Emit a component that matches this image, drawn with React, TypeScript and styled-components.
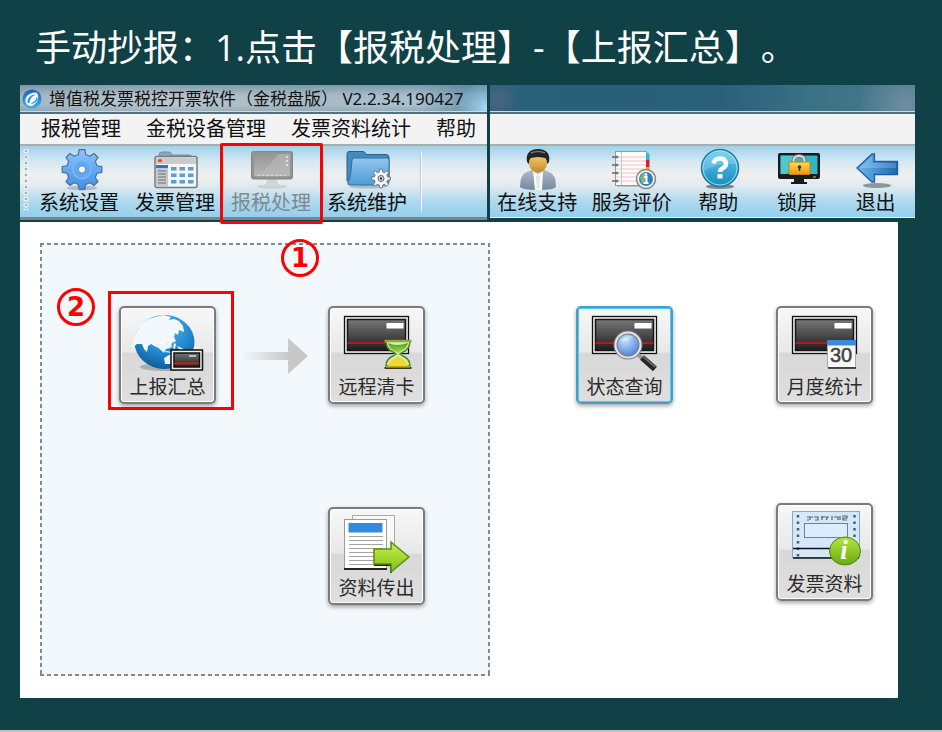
import React from "react";
import styled, { createGlobalStyle, css } from "styled-components";

const GlobalStyle = createGlobalStyle`
  *, *::before, *::after { box-sizing: border-box; }
  body {
    margin: 0;
    background: #104146;
    font-family: "Noto Sans", "Noto Sans CJK SC", sans-serif;
    text-spacing-trim: space-all;
    color: #111;
  }
  button { font: inherit; color: inherit; background: none; border: 0; padding: 0; cursor: pointer; }
`;

const Slide = styled.main`
  min-height: 100vh;
  padding: 18px 27px 24px 20px;
  background: #104146;
  border-bottom: 2px solid #c0c0c0;
`;

const Heading = styled.h1`
  margin: 0 0 7px;
  padding-left: 15px;
  font-family: "Open Sans", "Noto Sans CJK SC", sans-serif;
  font-size: 36px;
  font-weight: 400;
  line-height: 60px;
  color: #fff;
  white-space: nowrap;
`;

const Windows = styled.div`
  display: grid;
  grid-template-columns: minmax(0, 467fr) minmax(0, 425fr);
  gap: 3px;
  align-items: start;
`;

const Window = styled.section<{ $framed?: boolean }>`
  border-bottom: ${(p) => (p.$framed ? "3px solid #7d8589" : "1px solid #eef6fa")};
`;

const TitleBar = styled.header<{ $plain?: boolean }>`
  display: flex;
  align-items: center;
  gap: 7px;
  height: 29px;
  padding: 0 2px;
  border-bottom: 2px solid #54707f;
  box-shadow: inset 0 -1px 0 #c9dbe4;
  font-size: 17px;
  line-height: 24px;
  white-space: nowrap;
  background: ${(p) =>
    p.$plain
      ? "radial-gradient(circle at 8px 14px, #4d6580, transparent 22px), radial-gradient(circle at 98% 80%, #6f8ea2, transparent 50px), linear-gradient(90deg, #29607a, #2a6079 55%, #3b7186 75%, #47788c)"
      : "radial-gradient(circle at 100% 90%, #a9dcf6, transparent 30px), linear-gradient(180deg, rgba(90,125,145,.55), transparent 40%, transparent 75%, rgba(90,125,145,.3)), linear-gradient(90deg, #a2b6c2, #b9c6cd 30%, #a7bac4 60%, #a9c0cd 85%, #5b8ba5)"};
`;

const WindowName = styled.h2`
  margin: 0;
  font-size: 17px;
  font-weight: 400;
`;

const MenuBar = styled.nav`
  display: flex;
  align-items: center;
  gap: 25px;
  height: 30px;
  padding-left: 21px;
  background: #f3f3f3;
  font-size: 20px;
  line-height: 28px;
  white-space: nowrap;
`;

const MenuItem = styled.button``;

const Toolbar = styled.div`
  display: flex;
  height: 73px;
  border-top: 2px solid #a9adb0;
  background: linear-gradient(180deg, #9fd2ec, #d5e8f2 22%, #efefef 42%, #e2ebf0 55%, #abd8ee 80%, #93cfee);
`;

const Grip = styled.span`
  width: 11px;
  flex: none;
  margin: 3px 0 6px;
  background: radial-gradient(circle at 6px 2px, #a9b6be 1px, #fff 2px, transparent 3px);
  background-size: 11px 6px;
`;

const Divider = styled.span`
  width: 2px;
  margin: 5px 0 5px 5px;
  background: #fff;
  border-left: 1px solid #b5c8d3;
`;

const ToolButton = styled.button<{ $grow?: number; $muted?: boolean }>`
  position: relative;
  display: flex;
  flex-direction: column;
  align-items: center;
  ${(p) => (p.$grow ? css`flex: ${p.$grow} 1 0;` : css`flex: 0 0 96px;`)}
  padding-top: 3px;
  font-size: 20px;
  line-height: 24px;
  white-space: nowrap;
  color: ${(p) => (p.$muted ? "#82898d" : "#111")};
  svg { flex: none; overflow: visible; }
`;

const ToolOutline = styled.span`
  position: absolute;
  inset: -3px -4px -7px -3px;
  border: 3px solid #f00;
  border-radius: 2px;
`;

const StepBadge = styled.span<{ $floating?: boolean }>`
  display: flex;
  align-items: center;
  justify-content: center;
  width: 38px;
  height: 38px;
  border: 3px solid #f00;
  border-radius: 50%;
  font-family: "DejaVu Sans", sans-serif;
  font-size: 26px;
  font-weight: 700;
  line-height: 30px;
  color: #f00;
  ${(p) => p.$floating && css`position: absolute; top: 93px; left: 58px; z-index: 2;`}
`;

const Workspace = styled.section`
  display: grid;
  grid-template-columns: minmax(0, 450fr) minmax(0, 408fr);
  margin: 2px 17px 0 0;
  padding: 21px 0 22px 20px;
  background: #fff;
`;

const dash = "#83898d 0 4px, transparent 4px 7px";
const Zone = styled.div`
  display: grid;
  grid-template-columns: 51px 134px minmax(66px, 1fr) 97px;
  align-items: start;
  row-gap: 97px;
  padding: 45px 65px 71px 17px;
  background:
    repeating-linear-gradient(90deg, ${dash}) top / 100% 2px no-repeat,
    repeating-linear-gradient(90deg, ${dash}) bottom / 100% 2px no-repeat,
    repeating-linear-gradient(180deg, ${dash}) left / 2px 100% no-repeat,
    repeating-linear-gradient(180deg, ${dash}) right / 2px 100% no-repeat,
    #f3f8fd;
`;

const TileOutline = styled.div`
  width: 126px;
  margin-top: 3px;
  padding: 12px 15px 3px 8px;
  border: 3px solid #f00;
`;

const FlowArrow = styled.svg`
  align-self: center;
  margin-top: 13px;
`;

const ZoneTile = styled.div<{ $last?: boolean }>`
  grid-column: 4;
  padding-top: ${(p) => (p.$last ? "0" : "18px")};
`;

const SideTiles = styled.div`
  display: grid;
  grid-template-columns: 97px 97px;
  justify-content: space-between;
  align-content: start;
  row-gap: 99px;
  padding: 63px 25px 0 86px;
`;

const TileButton = styled.button<{ $active?: boolean }>`
  display: flex;
  flex-direction: column;
  align-items: center;
  width: 97px;
  height: 98px;
  padding-top: 6px;
  border: 2px solid ${(p) => (p.$active ? "#4a9dc0" : "#7b7b7b")};
  border-radius: 5px;
  background: linear-gradient(180deg, #f7f7f7, #e8e8e8 47%, #d8d8d8 48%, #dfdfdf);
  box-shadow: inset 0 0 0 ${(p) => (p.$active ? "1px #45cdfb" : "1px #fff")}, 0 2px 4px rgba(0, 0, 0, 0.35);
  font-size: 19px;
  line-height: 24px;
  color: #2b2b2b;
  white-space: nowrap;
  svg { flex: none; overflow: visible; }
`;

const LastCell = styled.div`
  grid-column: 2;
`;

const ToolSvg = ({ children }: { children: React.ReactNode }) => (
  <svg width="48" height="42" viewBox="0 0 48 42" aria-hidden="true">{children}</svg>
);

const TileSvg = ({ children }: { children: React.ReactNode }) => (
  <svg width="80" height="61" viewBox="0 0 80 61" aria-hidden="true">{children}</svg>
);

const gearPath = (cx: number, cy: number, outer: number, inner: number, teeth: number) => {
  const points: string[] = [];
  for (let i = 0; i < teeth; i++) {
    const mid = (i * 2 * Math.PI) / teeth - Math.PI / 2;
    const step = Math.PI / teeth;
    [[-0.62, inner], [-0.36, outer], [0.36, outer], [0.62, inner]].forEach(([f, r]) => {
      const a = mid + f * step;
      points.push(`${(cx + r * Math.cos(a)).toFixed(2)} ${(cy + r * Math.sin(a)).toFixed(2)}`);
    });
  }
  return `M${points.join("L")}Z`;
};

const Shade = ({ id, from, to, flat }: { id: string; from: string; to: string; flat?: boolean }) => (
  <linearGradient id={id} x1="0" y1="0" x2={flat ? "1" : "0"} y2={flat ? "0" : "1"}>
    <stop offset="0" stopColor={from} />
    <stop offset="1" stopColor={to} />
  </linearGradient>
);

const LogoIcon = () => (
  <svg width="20" height="20" viewBox="0 0 20 20" aria-hidden="true">
    <defs><Shade id="logo" from="#1763b9" to="#36b6ee" /></defs>
    <circle cx="10" cy="10" r="9.6" fill="url(#logo)" />
    <path d="M3.500 13C2.500 7 8 3 14.500 3.500 18 7 16 14.500 10 17 7 17.500 4.500 16 3.500 13Z" fill="#f2faff" />
    <path d="M5.500 13.500C5 9 9 5.500 14 5.500 10 7 7.500 10 7.500 14.500Z" fill="#2b93df" />
    <path d="M9.500 14.500C13 13.500 15 11 15 8.500" fill="none" stroke="#2b93df" strokeWidth="1.300" />
  </svg>
);

const SettingsIcon = () => (
  <ToolSvg>
    <defs><Shade id="gear" from="#8cc4fa" to="#3f8fe6" /></defs>
    <ellipse cx="27" cy="39" rx="15" ry="2.500" fill="#557" opacity=".3" />
    <path d={gearPath(27, 20.5, 20, 15.5, 8)} fill="url(#gear)" stroke="#47719f" strokeWidth="1.200" strokeLinejoin="round" />
    <circle cx="27" cy="20.500" r="9" fill="#5fa9f0" stroke="#7ab9f6" strokeWidth="1.500" />
    <circle cx="27" cy="20.500" r="3.700" fill="#f4f6f8" stroke="#5685b4" />
  </ToolSvg>
);

const InvoiceManageIcon = () => (
  <ToolSvg>
    <path d="M8 11V6q0-3 3-3h7q2 0 3 3h17q3 0 3 3v5H8Z" fill="#8ba7bd" stroke="#7690a5" />
    <rect x="4" y="7.500" width="42" height="31" rx="2" fill="#f4f6f7" stroke="#77797c" strokeWidth="1.500" />
    <rect x="5" y="8.500" width="40" height="6.500" fill="#c9cccf" />
    <ellipse cx="9" cy="11.700" rx="2.200" ry="1.600" fill="#ef4335" />
    <rect x="5" y="16" width="12" height="22" fill="#c3c8cb" />
    <rect x="5" y="16" width="12" height="3" fill="#2878bb" />
    {[22, 25, 28, 31, 34].map((y) => <path key={y} d={`M7 ${y}h8`} stroke="#6c7478" />)}
    {[18, 24.5, 31].map((y) => [20, 28.5, 37].map((x) => (
      <rect key={`${x}-${y}`} x={x} y={y} width="5.500" height="3.500" fill="#5a9ed2" />
    )))}
  </ToolSvg>
);

const TaxIcon = () => (
  <ToolSvg>
    <defs><Shade id="mon" from="#969696" to="#b5b5b5" /></defs>
    <ellipse cx="25" cy="37.500" rx="15" ry="2" fill="#999" opacity=".35" />
    <path d="M20 30h10l1 5q5 1 5 3H14q0-2 5-3Z" fill="#d4d4d4" />
    <rect x="4.500" y="2.500" width="41" height="27.500" rx="2" fill="#909294" stroke="#85888a" />
    <rect x="7" y="5" width="36" height="22" fill="url(#mon)" />
    <path d="M32 5h11v22H12Z" fill="#b8b8b8" opacity=".7" />
    <path d="M10 26.500h29" stroke="#d5d5d5" strokeWidth="1.500" strokeDasharray="3 1.500" />
    <path d="M40 7v10" stroke="#e0e0e0" strokeWidth="2" strokeDasharray="2 2" />
  </ToolSvg>
);

const MaintainIcon = () => (
  <ToolSvg>
    <defs><Shade id="fold" from="#90c7ed" to="#4f9bd5" /></defs>
    <ellipse cx="25" cy="37.500" rx="19" ry="2" fill="#456" opacity=".3" />
    <path d="M4 32V5q0-2.500 2-2.500h14q2 0 3 3h20q3 0 3 3V32Z" fill="#4489bf" stroke="#27618f" />
    <path d="M9 11q0-2 2-2h33q2 0 2 2v22q0 3-3 3H7q-3 0-2-3 3-4 4-22Z" fill="url(#fold)" stroke="#3170a1" />
    <path d={gearPath(38, 29.5, 9.5, 6.8, 8)} fill="#f4f6f7" stroke="#6a7b88" />
    <circle cx="38" cy="29.500" r="3" fill="#d5dadd" stroke="#56656f" />
    <circle cx="38" cy="29.500" r="1.200" fill="#333" />
  </ToolSvg>
);

const SupportIcon = () => (
  <ToolSvg>
    <defs>
      <Shade id="suit" from="#b0bdca" to="#75889d" />
      <Shade id="face" from="#f4d27c" to="#c8892a" />
    </defs>
    <path d="M7 38q0-13 7-15l7-3h8l7 3q7 2 7 15-2 3-18 3T7 38Z" fill="url(#suit)" />
    <path d="M20 22l5 3 5-3-1 19h-7Z" fill="#fafafa" />
    <path d="M25 25l2 3-1 12h-2l-1-12Z" fill="#e1e5e9" />
    <ellipse cx="25" cy="14" rx="9" ry="9.500" fill="url(#face)" />
    <path d="M14 13Q12 .500 25 0 38 .500 36 13l-2 2q0-5-2-6-6-1-7-1t-7 1q-2 1-2 6Z" fill="#242424" />
    <path d="M18 4q7-3 14 0" stroke="#777" strokeWidth="1.500" fill="none" />
  </ToolSvg>
);

const ReviewIcon = () => (
  <ToolSvg>
    <rect x="9" y="3" width="32" height="35" rx="1" fill="#999" opacity=".5" />
    <rect x="7.500" y="2.500" width="31" height="34" fill="#fdfdfd" stroke="#999" />
    {[8, 12, 16, 20, 24, 28, 32].map((y) => <path key={y} d={`M8 ${y}h30`} stroke="#f5bcbc" />)}
    <path d="M13.500 3v33" stroke="#9fd5ec" />
    {[8, 16, 24, 32].map((y) => (
      <g key={y}><path d={`M4 ${y}h6`} stroke="#555" strokeWidth="1.300" /><circle cx="9" cy={y} r="1.500" fill="#777" /></g>
    ))}
    <rect x="38" y="5" width="3.500" height="6" fill="#22b8e2" />
    <rect x="38" y="11" width="3.500" height="7" fill="#d71f39" />
    <rect x="38" y="18" width="3.500" height="7" fill="#e0a62f" />
    <circle cx="38" cy="30" r="9.500" fill="#f5f5ee" stroke="#85877e" strokeWidth="1.500" />
    <circle cx="38" cy="30" r="7" fill="#3180bd" />
    <path d="M32 29q2-6 6-5l2 3-3 6-3 2Z" fill="#7bb68a" />
    <path d="M36 28h2.500v6M35.500 34h5" stroke="#fff" strokeWidth="2" fill="none" />
    <circle cx="38" cy="25.500" r="1.300" fill="#fff" />
  </ToolSvg>
);

const HelpIcon = () => (
  <ToolSvg>
    <defs><Shade id="help" from="#67c9ee" to="#168bc0" /></defs>
    <ellipse cx="26" cy="37.500" rx="14" ry="2.500" fill="#333" opacity=".55" />
    <circle cx="26" cy="19" r="18.500" fill="url(#help)" stroke="#24789d" strokeWidth="1.500" />
    <circle cx="26" cy="19" r="17" fill="none" stroke="#a3e5f8" strokeWidth="1" />
    <path d="M10 14Q16 2 29 3t14 13Q29 12 10 22Z" fill="#b2e8fa" opacity=".3" />
    <path d="M19.500 14.500q1-5 6.500-5t6 5q0 3-3 4.500-3 1.500-3 4" fill="none" stroke="#fff" strokeWidth="4.500" />
    <rect x="23.500" y="25" width="5" height="4.500" fill="#fff" />
  </ToolSvg>
);

const LockIcon = () => (
  <ToolSvg>
    <defs><Shade id="lock" from="#ffdc50" to="#ec9710" /></defs>
    <rect x="5" y="4" width="42" height="26" rx="2" fill="#161b1e" />
    <rect x="7.500" y="6.500" width="37" height="18.500" fill="#2db9c4" />
    <path d="M7.500 6.500h20L13 25H7.500Z" fill="#69dbe0" opacity=".5" />
    <path d="M21 30h10v3h3v2H18v-2h3Z" fill="#16191b" />
    <path d="M20.500 17v-5q0-5 5.500-5t5.500 5v5" fill="none" stroke="#777" strokeWidth="4" />
    <path d="M20.500 17v-5q0-5 5.500-5t5.500 5v5" fill="none" stroke="#ddd" strokeWidth="2" />
    <rect x="16" y="13" width="21" height="12.500" rx="1" fill="url(#lock)" stroke="#c87e09" />
    <circle cx="26.500" cy="18" r="1.800" fill="#333" /><path d="M26.500 18.500v3.500" stroke="#333" strokeWidth="1.500" />
    <path d="M40 28h3" stroke="#e9c51b" />
  </ToolSvg>
);

const ExitIcon = () => (
  <ToolSvg>
    <defs><Shade id="exit" from="#6db7ef" to="#1c67b5" flat /></defs>
    <ellipse cx="25" cy="36.500" rx="14" ry="2.500" fill="#45505a" opacity=".55" />
    <path d="M5 19 20 5h2.500v7.500H45.500v13H22.500V33H20Z" fill="url(#exit)" stroke="#1d61a4" strokeWidth="1.300" />
    <path d="M7.500 19 20 7v7h24v5Z" fill="#fff" opacity=".18" />
  </ToolSvg>
);

const Panel = () => (
  <>
    <defs><Shade id="panel" from="#777" to="#1d1d1d" /></defs>
    <rect x="7.500" y="2.500" width="64" height="37" fill="#eee" stroke="#111" strokeWidth="1.300" />
    <rect x="10.500" y="5.500" width="58" height="31" fill="url(#panel)" stroke="#161616" strokeWidth="1.500" />
    <path d="M10.500 29h58" stroke="#e01515" strokeWidth="1.600" />
    <rect x="49.500" y="9" width="17" height="5.500" fill="#fff" />
  </>
);

const UploadIcon = () => (
  <TileSvg>
    <defs>
      <radialGradient id="sea" cx=".5" cy=".25" r=".8">
        <stop offset="0" stopColor="#54b7ec" /><stop offset=".55" stopColor="#2389cd" /><stop offset="1" stopColor="#0b5596" />
      </radialGradient>
      <Shade id="mini" from="#777" to="#1d1d1d" />
    </defs>
    <ellipse cx="36" cy="53" rx="24" ry="4" fill="#555" opacity=".35" />
    <ellipse cx="36.500" cy="28" rx="30" ry="27" fill="url(#sea)" />
    <path d="M9 17Q14 6 27 3l8-2 8 2-2 3 5-1 5 2 4 5 1 6-5-2-1 5-3-2-1 4 2 4-4 2-2 5-4 1-2 4-3-5-5-1-5-3-3 2-1 6-3-3-2-5-5 0-5 4 1-7Z" fill="#f2f8fb" />
    <path d="M29 28l4 3 4 5-2 2-7-6ZM38 27l5 2 1 4-4 1-3-3ZM46 29l2 1-1 5-2-1ZM38 37l7 1-1 1-7-1ZM49 32l5 2 3 3-5 0ZM36 44l5-3 4-2 2 4 1 4-5 3-6 0Z" fill="#eaf4f8" />
    <rect x="43" y="36" width="31.500" height="20" fill="#eee" stroke="#111" strokeWidth="1.500" />
    <rect x="46" y="39" width="25.500" height="14" fill="url(#mini)" stroke="#111" strokeWidth="1.500" />
    <path d="M46 49.500h25" stroke="#e01515" strokeWidth="1.800" />
    <path d="M61 42h7" stroke="#eee" strokeWidth="1.300" />
  </TileSvg>
);

const ClearCardIcon = () => (
  <TileSvg>
    <defs>
      <Shade id="glassTop" from="#4f9e22" to="#a7d951" />
      <Shade id="glassBottom" from="#d6e04e" to="#ffd51f" />
    </defs>
    <Panel />
    <path d="M49 27h24q0 8-7 11l-3 2 3 2q7 3 7 10H49q0-7 7-10l3-2-3-2q-7-3-7-11Z" fill="#d8edac" stroke="#4f8a27" strokeWidth="1.500" />
    <path d="M51 29q8 4 20 0-1 5-7 8l-3 2-4-2q-5-3-6-8Z" fill="url(#glassTop)" />
    <path d="M51 52q1-5 7-8l3-2 3 2q6 3 7 8Z" fill="url(#glassBottom)" />
    <path d="M47.500 27h27" stroke="#91a737" strokeWidth="2.500" />
    <path d="M47.500 54h27" stroke="#413914" strokeWidth="2" />
    <path d="M49 53h24" stroke="#e7b820" />
  </TileSvg>
);

const QueryIcon = () => (
  <TileSvg>
    <defs>
      <radialGradient id="lens" cx=".4" cy=".3" r=".8">
        <stop offset="0" stopColor="#c7e3ff" /><stop offset=".5" stopColor="#7da9eb" /><stop offset="1" stopColor="#456bbd" />
      </radialGradient>
    </defs>
    <Panel />
    <path d="M52 40l5 4" stroke="#999" strokeWidth="4" />
    <path d="M57 43.500 70 55" stroke="#25282b" strokeWidth="6" />
    <path d="M58 42.500 70 53" stroke="#777" strokeWidth="1.500" />
    <circle cx="43" cy="31" r="12.500" fill="url(#lens)" stroke="#7b8087" strokeWidth="4" />
    <circle cx="43" cy="31" r="12.500" fill="none" stroke="#e3e6e9" strokeWidth="2" />
    <path d="M35 28q4-7 13-6-2 5-13 6Z" fill="#fff" opacity=".35" />
  </TileSvg>
);

const StatsSvgText = styled.text`
  font-family: "Liberation Sans", sans-serif;
  font-size: 20px;
  fill: #444;
  stroke: #444;
  stroke-width: 0.5px;
`;

const StatsIcon = () => (
  <TileSvg>
    <Panel />
    <rect x="42.500" y="26.500" width="28" height="27" fill="#f8f8f8" stroke="#aaa" />
    <rect x="42" y="26" width="29" height="5.500" fill="#3b8bd5" />
    <path d="M43 54h28" stroke="#222" strokeWidth="1.500" />
    <StatsSvgText x="56" y="48" textAnchor="middle">30</StatsSvgText>
  </TileSvg>
);

const ExportIcon = () => (
  <TileSvg>
    <defs><Shade id="go" from="#c9ee52" to="#7fc111" /></defs>
    <rect x="15.500" y=".500" width="42" height="46" fill="#f8f8f8" stroke="#aaa" />
    <rect x="7.500" y="4.500" width="42" height="49" fill="#fff" stroke="#9b9b9b" />
    <path d="M7 54h43" stroke="#222" strokeWidth="2" />
    <rect x="11.500" y="8" width="34" height="9.500" fill="#358bdb" />
    {[21.5, 25.5, 29.5, 33.5, 37.5, 41.500, 45.500, 49.500].map((y) => <path key={y} d={`M12 ${y}h34`} stroke="#a4a4a4" />)}
    <path d="M37 50h17v8" stroke="#222" strokeWidth="2" fill="none" />
    <path d="M37 34h17v-7L72 42 54 57v-8H37Z" fill="url(#go)" stroke="#5b8c17" strokeWidth="1.500" />
  </TileSvg>
);

const InfoText = styled.text`
  font-family: "Liberation Serif", serif;
  font-size: 27px;
  font-style: italic;
  font-weight: 700;
  fill: #fff;
`;

const InvoiceIcon = () => (
  <TileSvg>
    <defs><Shade id="info" from="#b6e243" to="#67ac0d" /></defs>
    <rect x="7.500" y=".500" width="67" height="46" fill="#d4e8fb" stroke="#83a9cd" />
    <path d="M13 4v42M69.500 4v24" stroke="#4c5c69" strokeWidth="2.500" strokeDasharray="2.500 4" />
    <path d="M22 6h6m-3 0v3m-3 0h2M29 6h4v3h-3M37 5v4M36 6h7l-2 3M47 5v4m2-3h4v3m2-4v4m2-4h5v2h-4v2h4" stroke="#52616d" strokeWidth="1.200" fill="none" />
    <rect x="19.500" y="12.500" width="43" height="14" fill="#dcecfc" stroke="#73818e" />
    <path d="M8 37.500h66M8 47h66" stroke="#111" strokeWidth="1.300" />
    <ellipse cx="60" cy="40" rx="15.500" ry="14" fill="url(#info)" stroke="#508a0c" />
    <InfoText x="59" y="48" textAnchor="middle">i</InfoText>
  </TileSvg>
);

const supportTools = [
  { label: "在线支持", grow: 6, icon: <SupportIcon /> },
  { label: "服务评价", grow: 6, icon: <ReviewIcon /> },
  { label: "帮助", grow: 5, icon: <HelpIcon /> },
  { label: "锁屏", grow: 5, icon: <LockIcon /> },
  { label: "退出", grow: 5, icon: <ExitIcon /> },
];

export default function App() {
  return (
    <>
      <GlobalStyle />
      <Slide>
        <Heading>手动抄报：1.点击【报税处理】-【上报汇总】。</Heading>
        <Windows>
          <Window $framed>
            <TitleBar>
              <LogoIcon />
              <WindowName>增值税发票税控开票软件（金税盘版） V2.2.34.190427</WindowName>
            </TitleBar>
            <MenuBar>
              {["报税管理", "金税设备管理", "发票资料统计", "帮助"].map((name) => (
                <MenuItem key={name} type="button">{name}</MenuItem>
              ))}
            </MenuBar>
            <Toolbar>
              <Grip />
              <ToolButton type="button"><SettingsIcon />系统设置</ToolButton>
              <ToolButton type="button"><InvoiceManageIcon />发票管理</ToolButton>
              <ToolButton type="button" $muted>
                <TaxIcon />报税处理
                <ToolOutline />
                <StepBadge $floating>1</StepBadge>
              </ToolButton>
              <ToolButton type="button"><MaintainIcon />系统维护</ToolButton>
              <Divider />
            </Toolbar>
          </Window>
          <Window>
            <TitleBar $plain />
            <MenuBar />
            <Toolbar>
              {supportTools.map((tool) => (
                <ToolButton key={tool.label} type="button" $grow={tool.grow}>{tool.icon}{tool.label}</ToolButton>
              ))}
            </Toolbar>
          </Window>
        </Windows>
        <Workspace>
          <Zone>
            <StepBadge>2</StepBadge>
            <TileOutline>
              <TileButton type="button"><UploadIcon />上报汇总</TileButton>
            </TileOutline>
            <FlowArrow width="66" height="36" viewBox="0 0 66 36" aria-hidden="true">
              <defs><Shade id="flow" from="#f3f8fd" to="#c8c8c8" flat /></defs>
              <path d="M0 14h46v8H0Z" fill="url(#flow)" />
              <path d="M46 0 66 18 46 36Z" fill="#c8c8c8" />
            </FlowArrow>
            <ZoneTile>
              <TileButton type="button"><ClearCardIcon />远程清卡</TileButton>
            </ZoneTile>
            <ZoneTile $last>
              <TileButton type="button"><ExportIcon />资料传出</TileButton>
            </ZoneTile>
          </Zone>
          <SideTiles>
            <TileButton type="button" $active><QueryIcon />状态查询</TileButton>
            <TileButton type="button"><StatsIcon />月度统计</TileButton>
            <LastCell>
              <TileButton type="button"><InvoiceIcon />发票资料</TileButton>
            </LastCell>
          </SideTiles>
        </Workspace>
      </Slide>
    </>
  );
}
